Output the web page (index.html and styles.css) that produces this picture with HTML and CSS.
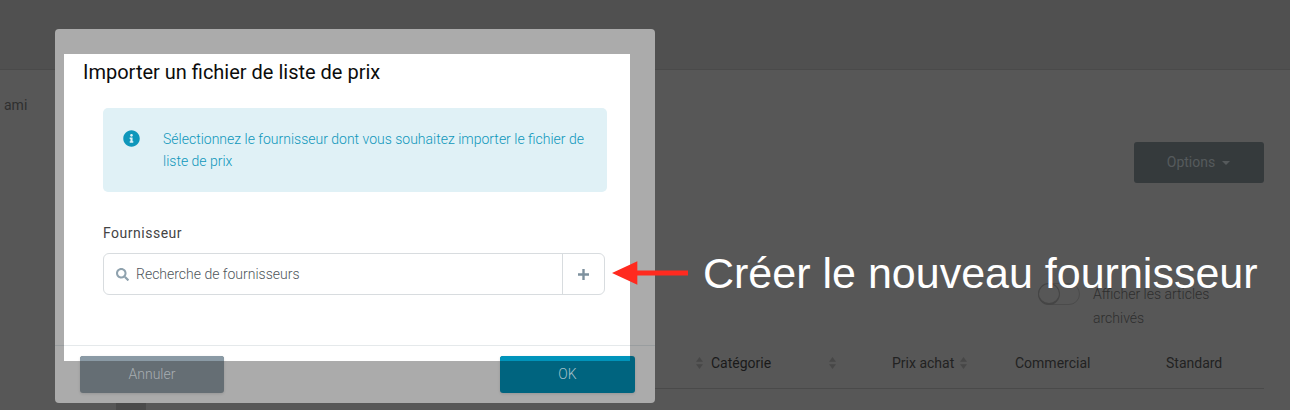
FILE: index.html
```html
<!DOCTYPE html>
<html lang="fr">
<head>
<meta charset="utf-8">
<title>Importer un fichier de liste de prix</title>
<link rel="stylesheet" href="styles.css">
</head>
<body>
<div class="page">
  <header class="topbar"></header>
  <main class="content">
    <p class="crumb">ami</p>
    <div class="actions"><button class="options">Options<span class="caret"></span></button></div>
    <div class="archive">
      <span class="toggle"><span class="knob"></span></span>
      <span class="archive-label">Afficher les articles archivés</span>
    </div>
    <div class="thead">
      <div class="th th-cat">
        <svg class="sort" viewBox="0 0 8 14"><path d="M4 0l4 5.500H0zM4 14L0 8.500h8z"/></svg>
        <span>Catégorie</span>
        <svg class="sort sort-end" viewBox="0 0 8 14"><path d="M4 0l4 5.500H0zM4 14L0 8.500h8z"/></svg>
      </div>
      <div class="th th-price">
        <span>Prix achat</span>
        <svg class="sort" viewBox="0 0 8 14"><path d="M4 0l4 5.500H0zM4 14L0 8.500h8z"/></svg>
      </div>
      <div class="th th-com">Commercial</div>
      <div class="th">Standard</div>
    </div>
    <div class="stub"></div>
  </main>

  <section class="modal">
    <div class="sheet">
      <h1 class="title">Importer un fichier de liste de prix</h1>
      <div class="notice">
        <svg class="notice-icon" viewBox="0 0 512 512"><path d="M256 8C119.043 8 8 119.083 8 256c0 136.997 111.043 248 248 248s248-111.003 248-248C504 119.083 392.957 8 256 8zm0 110c23.196 0 42 18.804 42 42s-18.804 42-42 42-42-18.804-42-42 18.804-42 42-42zm56 254c0 6.627-5.373 12-12 12h-88c-6.627 0-12-5.373-12-12v-24c0-6.627 5.373-12 12-12h12v-64h-12c-6.627 0-12-5.373-12-12v-24c0-6.627 5.373-12 12-12h64c6.627 0 12 5.373 12 12v100h12c6.627 0 12 5.373 12 12v24z"/></svg>
        <p class="notice-text">Sélectionnez le fournisseur dont vous souhaitez importer le fichier de liste de prix</p>
      </div>
      <label class="field-label">Fournisseur</label>
      <div class="field">
        <div class="search">
          <svg class="search-icon" viewBox="0 0 512 512"><path d="M505 442.700L405.300 343c-4.500-4.500-10.600-7-17-7H372c27.600-35.300 44-79.700 44-128C416 93.100 322.900 0 208 0S0 93.100 0 208s93.100 208 208 208c48.300 0 92.700-16.400 128-44v16.300c0 6.400 2.500 12.500 7 17l99.700 99.700c9.400 9.400 24.600 9.400 33.900 0l28.300-28.300c9.400-9.400 9.400-24.600.1-34zM208 336c-70.700 0-128-57.200-128-128 0-70.700 57.200-128 128-128 70.700 0 128 57.200 128 128 0 70.700-57.200 128-128 128z"/></svg>
          <span class="placeholder">Recherche de fournisseurs</span>
        </div>
        <div class="add"><svg class="add-icon" viewBox="0 0 12 12"><path d="M4.700 0h2.600v4.700H12v2.600H7.300V12H4.700V7.300H0V4.700h4.700z"/></svg></div>
      </div>
    </div>
    <footer class="modal-foot">
      <button class="btn btn-cancel">Annuler</button>
      <button class="btn btn-ok">OK</button>
    </footer>
  </section>

  <div class="callout">
    <svg class="arrow" viewBox="0 0 78 26"><path d="M0 13L26 1v9.500h52v5H26V25z"/></svg>
    <span class="callout-text">Créer le nouveau fournisseur</span>
  </div>
</div>
</body>
</html>
```

FILE: styles.css
```css
* { box-sizing: border-box; }
html, body { margin: 0; padding: 0; }
body { font-family: Roboto, "Liberation Sans", sans-serif; }
p, h1 { margin: 0; }
.page {
  position: relative;
  width: 1290px;
  height: 410px;
  overflow: hidden;
  background: #575757;
}
.topbar {
  height: 70px;
  background: #505050;
  border-bottom: 1px solid #4a4a4a;
}
.content { height: 340px; padding-right: 26px; }
.crumb {
  padding: 25px 0 0 4px;
  font-size: 14px;
  line-height: 20px;
  color: #2f2f2f;
}
.actions {
  display: flex;
  justify-content: flex-end;
  padding-top: 27px;
}
.options {
  display: flex;
  align-items: center;
  justify-content: center;
  gap: 7px;
  width: 130px;
  height: 41px;
  padding: 0 1px 2px 0;
  border: 0;
  border-radius: 3px;
  background: #353a3c;
  color: #565a5c;
  font: 400 14px Roboto, sans-serif;
}
.caret {
  width: 0;
  height: 0;
  margin-top: 2px;
  border-left: 4px solid transparent;
  border-right: 4px solid transparent;
  border-top: 4px solid #565a5c;
}
.archive {
  display: flex;
  justify-content: flex-end;
  gap: 13px;
  padding-top: 99px;
}
.toggle {
  display: block;
  width: 42px;
  height: 22px;
  margin-top: 1px;
  border: 1px solid #4b4b4b;
  border-radius: 11px;
}
.knob {
  display: block;
  width: 22px;
  height: 22px;
  margin: -1px;
  border: 1px solid #454545;
  border-bottom-width: 2px;
  border-radius: 50%;
  background: #575757;
}
.archive-label {
  width: 171px;
  padding-right: 40px;
  font-size: 14px;
  font-weight: 300;
  line-height: 24px;
  color: #2e2e2e;
}
.thead {
  display: grid;
  grid-template-columns: 192px 123px 151px 98px;
  align-items: center;
  height: 52px;
  margin: 7px 0 0 100px;
  padding-left: 600px;
  border-bottom: 1px solid #4a4a4a;
  color: #222;
  font-size: 14px;
}
.th { display: flex; align-items: center; font-weight: 400; }
.th-cat { gap: 8px; margin-left: -4px; color: #1a1a1a; }
.sort { width: 7px; height: 12px; fill: #474747; flex: none; }
.sort-end { margin-left: 50px; }
.th-price { gap: 6px; }
.stub {
  width: 30px;
  height: 30px;
  margin: 14px 0 0 116px;
  background: #4a4a4a;
}

.modal {
  position: absolute;
  left: 55px;
  top: 29px;
  width: 600px;
  height: 374px;
  border-radius: 4px;
  background: #ababab;
  padding-top: 25px;
}
.sheet {
  width: 566px;
  height: 307px;
  margin-left: 9px;
  padding: 6px 23px 0 39px;
  background: #fff;
}
.title {
  margin-left: -20px;
  font-size: 20px;
  font-weight: 400;
  line-height: 24px;
  color: #0c0c0c;
}
.notice {
  display: flex;
  gap: 23px;
  height: 84px;
  margin-top: 24px;
  padding: 20px 20px 0 20px;
  border-radius: 5px;
  background: #e0f1f6;
}
.notice-icon {
  flex: none;
  width: 17px;
  height: 17px;
  margin-top: 2px;
  fill: #0f97bb;
}
.notice-text {
  font-size: 14px;
  font-weight: 300;
  line-height: 22px;
  color: #0f97bb;
}
.field-label {
  display: block;
  margin-top: 31px;
  font-size: 14px;
  line-height: 20px;
  letter-spacing: .5px;
  color: #444;
}
.field {
  display: flex;
  width: 502px;
  height: 42px;
  margin-top: 10px;
  border: 1px solid #d8dcdf;
  border-radius: 6px;
}
.search {
  flex: 1;
  display: flex;
  align-items: center;
  gap: 7px;
  padding-left: 12px;
  border-right: 1px solid #d8dcdf;
}
.search-icon { width: 13px; height: 13px; fill: #8fa2ae; }
.placeholder { font-size: 14px; font-weight: 300; color: #4f565b; }
.add {
  display: flex;
  align-items: center;
  justify-content: center;
  width: 41px;
}
.add-icon { width: 11px; height: 11px; fill: #7e919e; }

.modal-foot {
  display: flex;
  justify-content: space-between;
  height: 48px;
  margin-top: -16px;
  padding: 10px 20px 0 25px;
  border-top: 1px solid rgba(0, 40, 60, .1);
}
.btn {
  position: relative;
  height: 37px;
  padding: 0 0 2px;
  border: 0;
  border-radius: 3px;
  font: 300 14px Roboto, sans-serif;
  overflow: hidden;
  box-shadow: 0 1px 3px rgba(0, 0, 0, .12);
}
.btn::before {
  content: "";
  position: absolute;
  left: 0;
  top: 0;
  height: 5px;
}
.btn-cancel {
  width: 144px;
  background: #656e74;
  color: #a7adb1;
}
.btn-cancel::before { width: 100%; background: #8a9aa5; }
.btn-ok {
  width: 135px;
  background: #00647f;
  color: #a4c0c9;
}
.btn-ok::before { width: 130px; background: #0094bb; }

.callout {
  position: absolute;
  left: 612px;
  top: 248px;
  display: flex;
  align-items: center;
  gap: 15px;
  height: 50px;
}
.arrow { width: 76px; height: 26px; fill: #ff2a1f; }
.callout-text {
  font-family: "Liberation Sans", Arial, sans-serif;
  font-size: 43px;
  line-height: 50px;
  color: #fff;
  white-space: nowrap;
}
```
